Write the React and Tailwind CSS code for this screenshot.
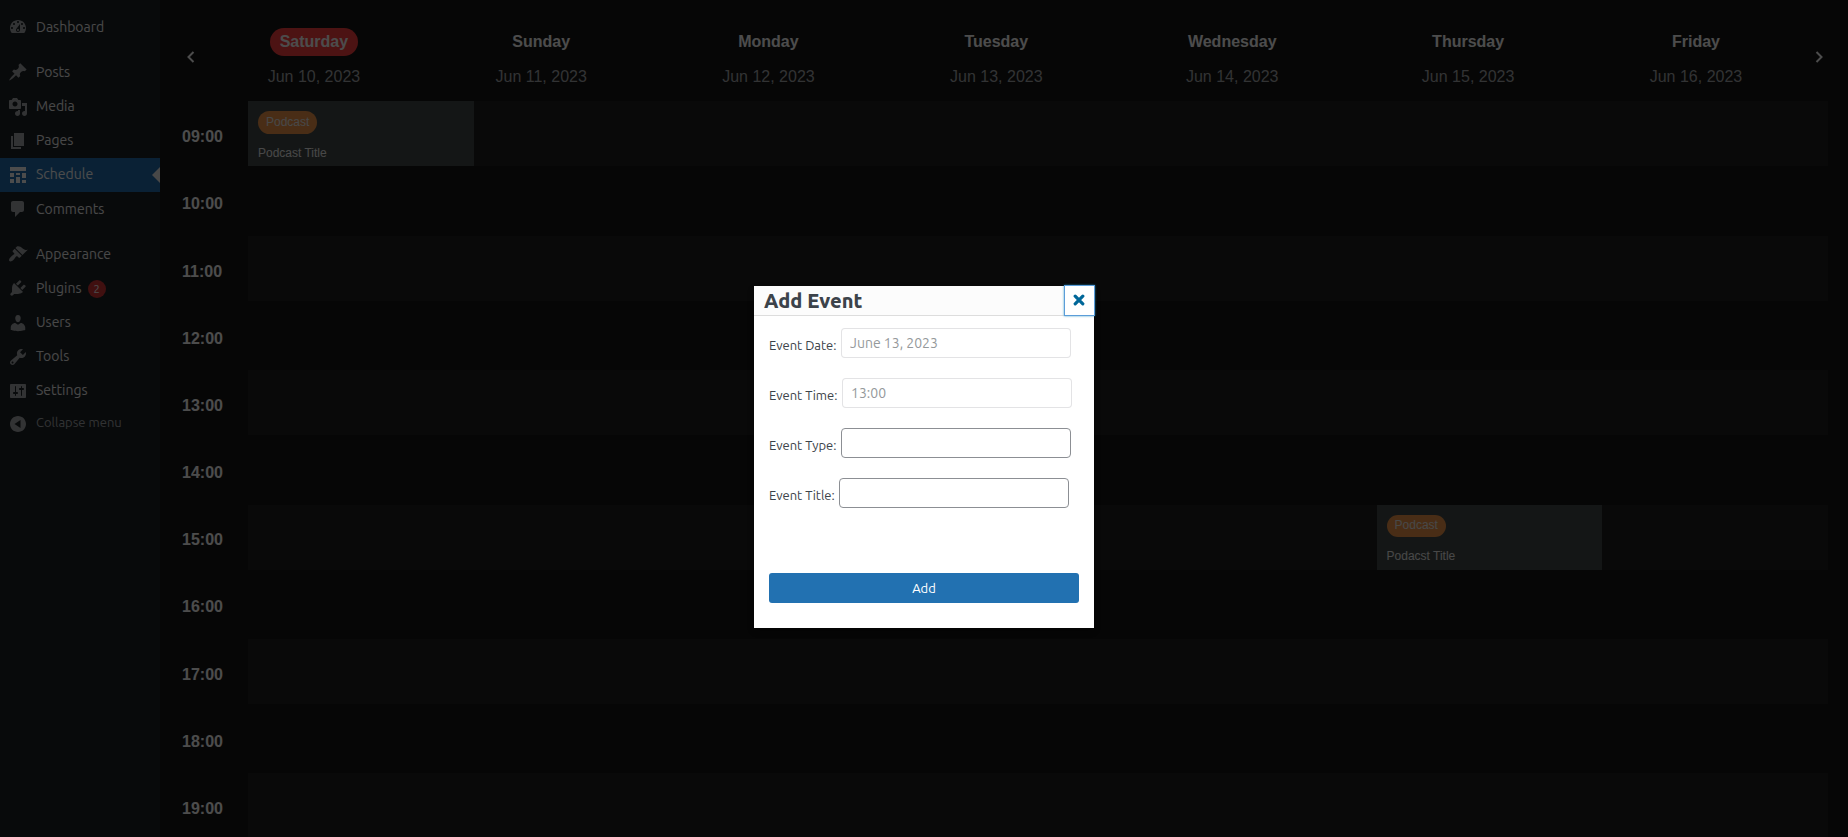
const ICONS = {
  dashboard: 'M3.76 16h12.48c1.1-1.37 1.76-3.11 1.76-5 0-4.42-3.58-8-8-8s-8 3.58-8 8c0 1.89.66 3.63 1.76 5zM10 4c.55 0 1 .45 1 1s-.45 1-1 1-1-.45-1-1 .45-1 1-1zM6 6c.55 0 1 .45 1 1s-.45 1-1 1-1-.45-1-1 .45-1 1-1zm8 0c.55 0 1 .45 1 1s-.45 1-1 1-1-.45-1-1 .45-1 1-1zm-5.37 5.55L12 7v6c0 1.1-.9 2-2 2s-2-.9-2-2c0-.57.24-1.08.63-1.45zM4 10c.55 0 1 .45 1 1s-.45 1-1 1-1-.45-1-1 .45-1 1-1zm12 0c.55 0 1 .45 1 1s-.45 1-1 1-1-.45-1-1 .45-1 1-1zm-5 3c0-.55-.45-1-1-1s-1 .45-1 1 .45 1 1 1 1-.45 1-1z',
  posts: 'M10.44 3.02l1.82-1.82 6.36 6.35-1.83 1.82c-1.05-.68-2.48-.57-3.41.36l-.75.75c-.92.93-1.04 2.35-.35 3.41l-1.83 1.82-2.41-2.41-2.8 2.79c-.42.42-3.38 2.71-3.8 2.29s1.86-3.39 2.28-3.81l2.79-2.79L4.1 9.36l1.83-1.82c1.05.69 2.48.57 3.4-.36l.75-.75c.93-.92 1.05-2.35.36-3.41z',
  media: 'M13 11V4c0-.55-.45-1-1-1h-1.67L9 1H5L3.67 3H2c-.55 0-1 .45-1 1v7c0 .55.45 1 1 1h10c.55 0 1-.45 1-1zM7 4.5c1.38 0 2.5 1.12 2.5 2.5S8.38 9.5 7 9.5 4.5 8.38 4.5 7 5.62 4.5 7 4.5zM14 6h5v10.5c0 1.38-1.12 2.5-2.5 2.5S14 17.88 14 16.5s1.12-2.5 2.5-2.5c.17 0 .34.02.5.05V9h-3V6zm-4 8.05V13h2v3.5c0 1.38-1.12 2.5-2.5 2.5S7 17.88 7 16.5 8.12 14 9.5 14c.17 0 .34.02.5.05z',
  pages: 'M6 15V2h10v13H6zm-1 1h8v2H3V5h2v11z',
  schedule: 'M2 2h16v4H2V2zm0 10V8h4v4H2zm6-2V8h4v2H8zm6 3V8h4v5h-4zm-6 5v-6h4v6H8zm-6 0v-4h4v4H2zm12 0v-3h4v3h-4z',
  comments: 'M5 2h9c1.1 0 2 .9 2 2v7c0 1.1-.9 2-2 2h-2l-5 5v-5H5c-1.1 0-2-.9-2-2V4c0-1.1.9-2 2-2z',
  appearance: 'M14.48 11.06L7.41 3.99l1.5-1.5c.5-.56 2.3-.47 3.51.32 1.21.8 1.43 1.28 2.91 2.1 1.18.64 2.45 1.26 4.45.85zm-.71.71L6.7 4.7 4.93 6.47c-.39.39-.39 1.02 0 1.41l1.06 1.06c.39.39.39 1.03 0 1.42-.6.6-1.43 1.11-2.21 1.69-.35.26-.7.53-1.01.84C1.43 14.23.4 16.08 1.4 17.07c.99 1 2.84-.03 4.18-1.36.31-.31.58-.66.85-1.02.57-.78 1.08-1.61 1.69-2.21.39-.39 1.02-.39 1.41 0l1.06 1.06c.39.39 1.02.39 1.41 0z',
  plugins: 'M13.11 4.36L9.87 7.6 8 5.73l3.24-3.24c.35-.34 1.05-.2 1.56.32.52.51.66 1.21.31 1.55zm-8 1.77l.91-1.12 9.01 9.01-1.19.84c-.71.71-2.63 1.16-3.82 1.16H6.14L4.9 17.26c-.59.59-1.54.59-2.12 0-.59-.58-.59-1.53 0-2.12l1.24-1.24v-3.88c0-1.13.4-3.19 1.09-3.89zm7.26 3.97l3.24-3.24c.34-.35 1.04-.21 1.55.31.52.51.66 1.21.31 1.55l-3.24 3.25z',
  users: 'M10 9.25c-2.27 0-2.73-3.44-2.73-3.44C7 4.02 7.82 2 9.97 2c2.16 0 2.98 2.02 2.71 3.81 0 0-.41 3.44-2.68 3.44zm0 2.57L12.72 10c2.39 0 4.52 2.33 4.52 4.53v2.49s-3.65 1.13-7.24 1.13c-3.65 0-7.24-1.13-7.24-1.13v-2.49c0-2.25 1.94-4.48 4.47-4.48z',
  tools: 'M16.68 9.77c-1.34 1.34-3.3 1.67-4.95.99l-5.41 6.52c-.99.99-2.59.99-3.58 0s-.99-2.59 0-3.57l6.52-5.42c-.68-1.65-.35-3.61.99-4.95 1.28-1.28 3.12-1.62 4.72-1.06l-2.89 2.89 2.82 2.82 2.86-2.87c.53 1.58.18 3.39-1.08 4.65zM3.81 16.21c.4.39 1.04.39 1.43 0 .4-.4.4-1.04 0-1.43-.39-.4-1.03-.4-1.43 0-.39.39-.39 1.03 0 1.43z',
  settings: 'M18 16V4c0-.55-.45-1-1-1H3c-.55 0-1 .45-1 1v12c0 .55.45 1 1 1h14c.55 0 1-.45 1-1zM8 11h1c.55 0 1 .45 1 1s-.45 1-1 1H8v1.5c0 .28-.22.5-.5.5s-.5-.22-.5-.5V13H6c-.55 0-1-.45-1-1s.45-1 1-1h1V5.5c0-.28.22-.5.5-.5s.5.22.5.5V11zm5-2h-1c-.55 0-1-.45-1-1s.45-1 1-1h1V5.5c0-.28.22-.5.5-.5s.5.22.5.5V7h1c.55 0 1 .45 1 1s-.45 1-1 1h-1v5.5c0 .28-.22.5-.5.5s-.5-.22-.5-.5V9z',
  collapse: 'M10 2c4.42 0 8 3.58 8 8s-3.58 8-8 8-8-3.58-8-8 3.58-8 8-8zM12.5 6L6.500 10l6 4V6z',
};

function Icon({ name }) {
  return (
    <svg viewBox="0 0 20 20" className="size-5 shrink-0 fill-current" fillRule="evenodd">
      <path d={ICONS[name]} />
    </svg>
  );
}

const MENU = [
  [{ icon: 'dashboard', label: 'Dashboard' }],
  [
    { icon: 'posts', label: 'Posts' },
    { icon: 'media', label: 'Media' },
    { icon: 'pages', label: 'Pages' },
    { icon: 'schedule', label: 'Schedule', active: true },
    { icon: 'comments', label: 'Comments' },
  ],
  [
    { icon: 'appearance', label: 'Appearance' },
    { icon: 'plugins', label: 'Plugins', badge: 2 },
    { icon: 'users', label: 'Users' },
    { icon: 'tools', label: 'Tools' },
    { icon: 'settings', label: 'Settings' },
  ],
];

const DAYS = [
  ['Saturday', 'Jun 10, 2023'],
  ['Sunday', 'Jun 11, 2023'],
  ['Monday', 'Jun 12, 2023'],
  ['Tuesday', 'Jun 13, 2023'],
  ['Wednesday', 'Jun 14, 2023'],
  ['Thursday', 'Jun 15, 2023'],
  ['Friday', 'Jun 16, 2023'],
];

const HOURS = ['09:00', '10:00', '11:00', '12:00', '13:00', '14:00', '15:00', '16:00', '17:00', '18:00', '19:00'];

const EVENTS = {
  '09:00-0': { type: 'Podcast', title: 'Podcast Title' },
  '15:00-5': { type: 'Podcast', title: 'Podacst Title' },
};

function MenuItem({ icon, label, badge, active }) {
  return (
    <li
      className={
        active
          ? 'relative flex h-[34.2px] items-center gap-2 bg-[#2271b1] pl-2 text-white'
          : 'flex h-[34.2px] items-center gap-2 pl-2 text-[#a7aaad]'
      }
    >
      <Icon name={icon} />
      <span className={active ? 'text-white' : 'text-[#f0f0f1]'}>{label}</span>
      {badge && (
        <span className="-ml-0.5 mt-px flex size-[18px] items-center justify-center rounded-full bg-[#d63638] text-[11px] text-white">
          {badge}
        </span>
      )}
      {active && (
        <span className="absolute right-0 top-[9px] border-y-8 border-r-8 border-y-transparent border-r-[#f0f0f1]" />
      )}
    </li>
  );
}

function Sidebar() {
  return (
    <nav className="w-40 shrink-0 bg-[#1d2327] pt-[10.2px] text-[14px]">
      <div className="flex flex-col gap-[10.9px]">
        {MENU.map((group, i) => (
          <ul key={i}>
            {group.map((item) => (
              <MenuItem key={item.label} {...item} />
            ))}
          </ul>
        ))}
      </div>
      <div className="flex h-[29.6px] items-center gap-2 pl-2 text-[13px] text-[#a7aaad]">
        <span className="flex pt-[3px]">
          <Icon name="collapse" />
        </span>
        Collapse menu
      </div>
    </nav>
  );
}

function Chevron({ d }) {
  return (
    <svg viewBox="0 0 8 12" className="h-3 w-2 fill-none stroke-white stroke-2">
      <path d={d} />
    </svg>
  );
}

function EventCard({ type, title }) {
  return (
    <div className="flex h-full flex-col items-start bg-[#454c4a] px-2.5 pt-2.5 text-[12px] text-[#f0f0f1]">
      <span className="flex h-[22.4px] items-center rounded-full bg-[#f3984b] px-2 pb-px">{type}</span>
      <span className="mt-2.5 leading-[18px]">{title}</span>
    </div>
  );
}

function Calendar() {
  return (
    <main className="flex flex-1 flex-col bg-[#151515] font-['Liberation_Sans',Arial,sans-serif] text-[16px] text-white">
      <header className="flex h-[101.4px] shrink-0 items-start">
        <div className="flex w-10 justify-center pl-[22px] pt-[51px]">
          <Chevron d="M6.500 1L1.500 6l5 5" />
        </div>
        <div className="flex flex-1 justify-around pt-7">
          {DAYS.map(([day, date], i) => (
            <div key={day} className="flex flex-col items-center">
              <span
                className={
                  i === 0
                    ? 'flex h-7 items-center rounded-full bg-[#ff4040] px-2.5 pb-px font-bold'
                    : 'flex h-7 items-center px-2.5 pb-px font-bold'
                }
              >
                {day}
              </span>
              <span className="mt-[9px] leading-6 text-[#a7aaad]">{date}</span>
            </div>
          ))}
        </div>
        <div className="flex w-[38px] pl-[5px] pt-[51px]">
          <Chevron d="M1.500 1l5 5-5 5" />
        </div>
      </header>
      <div className="flex flex-col">
        {HOURS.map((hour, row) => (
          <div key={hour} className="flex h-[67.2px] shrink-0 pr-5">
            <div className="flex w-[88px] items-center pl-[22px] pt-[4.4px] font-bold">{hour}</div>
            <div className={row % 2 ? 'grid h-[65px] flex-1 grid-cols-7' : 'grid h-[65px] flex-1 grid-cols-7 bg-[#1f1f1f]'}>
              {DAYS.map(([day], col) => {
                const event = EVENTS[`${hour}-${col}`];
                return <div key={day}>{event && <EventCard {...event} />}</div>;
              })}
            </div>
          </div>
        ))}
      </div>
    </main>
  );
}

function Field({ label, value, disabled }) {
  return (
    <label className="flex h-[30px] items-center">
      <span className="pt-[5px] pr-[4.6px]">{label}</span>
      <input
        defaultValue={value}
        disabled={disabled}
        className={
          disabled
            ? 'h-[30px] w-[230px] rounded border border-[#dcdcde]/80 bg-white px-2 pb-px text-[14px] text-[#95999b]'
            : 'h-[30px] w-[230px] rounded border border-[#8c8f94] bg-white px-2 text-[14px] text-[#2c3338]'
        }
      />
    </label>
  );
}

function Modal() {
  return (
    <section className="relative h-[342px] w-[340px] bg-white text-[13px] text-[#3c434a] shadow-[0_3px_6px_rgba(0,0,0,0.3)]">
      <h2 className="flex h-[30px] items-center border-b border-[#dddddd] bg-[#fcfcfc] pl-2.5 text-[20px] font-extrabold">
        Add Event
      </h2>
      <button className="absolute -right-px -top-px flex size-[31px] items-center justify-center border border-[#5b9dd9] bg-white pr-px pb-px shadow-[0_0_2px_rgba(30,140,190,0.8)]">
        <svg viewBox="0 0 12 12" className="size-3 stroke-[#006799] stroke-[3.2]" strokeLinecap="round">
          <path d="M2.200 2.200l7.600 7.600M9.800 2.200l-7.600 7.600" />
        </svg>
      </button>
      <form className="flex flex-col gap-5 px-[15px] pt-3">
        <Field label="Event Date:" value="June 13, 2023" disabled />
        <Field label="Event Time:" value="13:00" disabled />
        <Field label="Event Type:" value="" />
        <Field label="Event Title:" value="" />
        <button className="mt-[45px] h-[30px] rounded-[3px] bg-[#2271b1] pt-px text-[13px] text-white">Add</button>
      </form>
    </section>
  );
}

export default function App() {
  return (
    <div className="relative flex h-[837px] w-[1848px] overflow-hidden font-['Ubuntu','Noto_Sans',sans-serif]">
      <Sidebar />
      <Calendar />
      <div className="absolute inset-0 flex items-start justify-center bg-black/70 pt-[286px]">
        <Modal />
      </div>
    </div>
  );
}
